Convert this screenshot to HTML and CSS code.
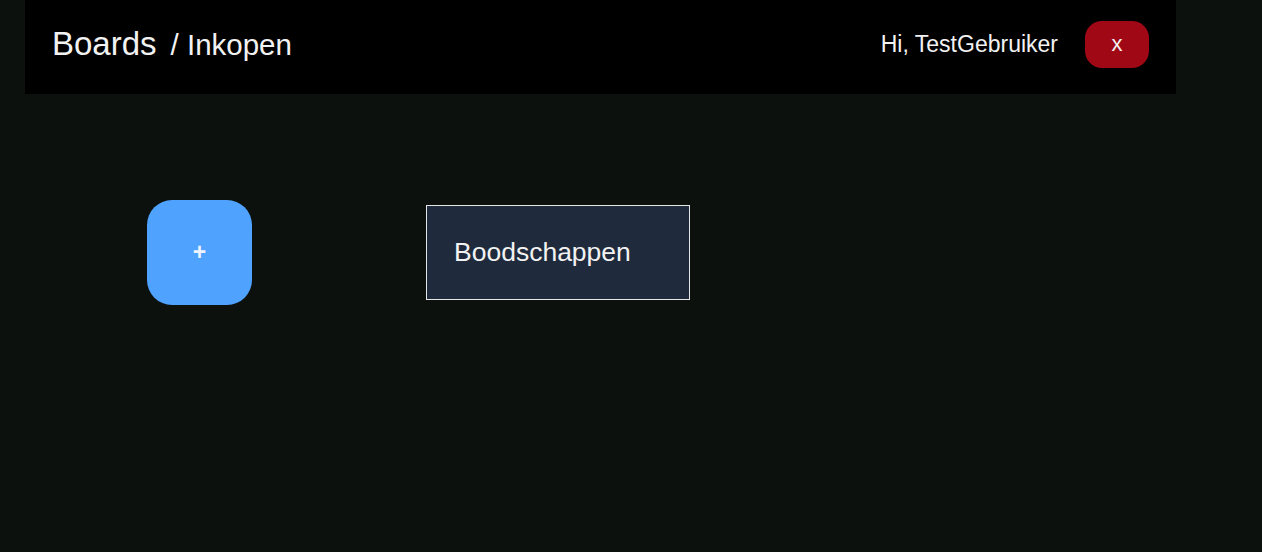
FILE: index.html
```html
<!DOCTYPE html>
<html>
<head>
<meta charset="utf-8">
<link rel="stylesheet" href="styles.css">
</head>
<body>
<header class="topbar">
  <div class="crumbs">
    <span class="crumb-main">Boards</span>
    <span class="crumb-sub">/ Inkopen</span>
  </div>
  <div class="user">
    <span class="greeting">Hi, TestGebruiker</span>
    <button class="logout">x</button>
  </div>
</header>
<main class="boards">
  <button class="add">+</button>
  <div class="card">Boodschappen</div>
</main>
</body>
</html>
```

FILE: styles.css
```css
html, body {
  margin: 0;
  padding: 0;
  background: #0c110d;
  font-family: "Liberation Sans", Arial, sans-serif;
  color: #f2f2f2;
}
body {
  height: 552px;
  overflow: hidden;
}
.topbar {
  margin-left: 25px;
  width: 1151px;
  height: 94px;
  background: #000;
  display: flex;
  align-items: center;
  justify-content: space-between;
  padding: 0 27px 6px 27px;
  box-sizing: border-box;
}
.crumbs {
  display: flex;
  align-items: baseline;
  gap: 14px;
}
.crumb-main {
  font-size: 33px;
}
.crumb-sub {
  font-size: 29.5px;
}
.user {
  display: flex;
  align-items: center;
  gap: 27px;
}
.greeting {
  font-size: 23px;
}
.logout {
  width: 64px;
  height: 47px;
  border: none;
  border-radius: 17px;
  background: #a10816;
  color: #f2f2f2;
  font-family: "Liberation Sans", Arial, sans-serif;
  font-size: 22px;
  padding: 0;
}
.boards {
  display: flex;
  align-items: center;
  gap: 174px;
  padding: 106px 0 0 147px;
}
.add {
  width: 105px;
  height: 105px;
  border: none;
  border-radius: 25px;
  background: #4fa3ff;
  color: #eef4ff;
  font-family: "Liberation Sans", Arial, sans-serif;
  font-size: 23px;
  font-weight: bold;
  padding: 0;
}
.card {
  width: 264px;
  height: 95px;
  box-sizing: border-box;
  border: 1px solid #e6e6e6;
  background: #1f2a3c;
  display: flex;
  align-items: center;
  padding-left: 27px;
  font-size: 26.5px;
  color: #f2f2f2;
}
```
